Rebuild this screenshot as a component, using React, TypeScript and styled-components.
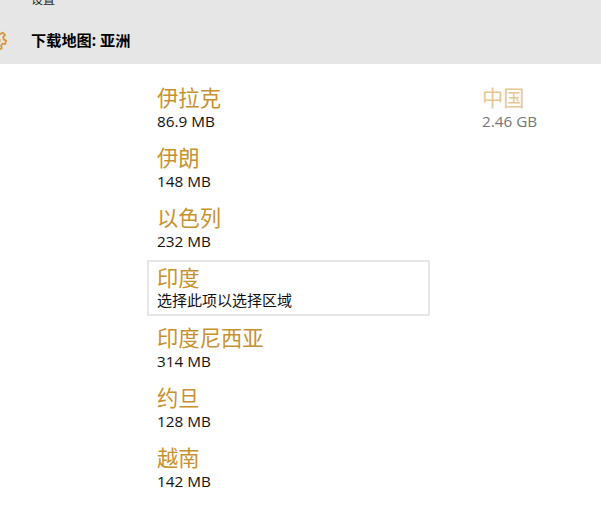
import React from 'react';
import styled, { createGlobalStyle } from 'styled-components';

const regions = [
  { name: '伊拉克', size: '86.9 MB' },
  { name: '伊朗', size: '148 MB' },
  { name: '以色列', size: '232 MB' },
  { name: '印度', size: '选择此项以选择区域', selected: true },
  { name: '印度尼西亚', size: '314 MB' },
  { name: '约旦', size: '128 MB' },
  { name: '越南', size: '142 MB' },
];

const GlobalStyle = createGlobalStyle`
  html, body {
    margin: 0;
    padding: 0;
    background: #fff;
  }
  body {
    font-family: "Open Sans", "Noto Sans CJK SC", sans-serif;
    overflow: hidden;
  }
`;

const Page = styled.div`
  width: 601px;
  height: 517px;
  overflow: hidden;
`;

const Header = styled.header`
  height: 64px;
  background: #e6e6e6;
  overflow: hidden;
`;

const BackLabel = styled.div`
  height: 6px;
  padding-left: 31px;
  font-size: 12px;
  line-height: 0;
  color: #222;
`;

const TitleRow = styled.div`
  display: flex;
  align-items: center;
  margin-top: 23px;
  margin-left: -15px;
`;

const GearIcon = styled.svg`
  width: 22px;
  height: 22px;
  flex: none;
  margin-right: 24px;
`;

const Title = styled.h1`
  margin: -2px 0 0;
  font-size: 15.2px;
  font-weight: 700;
  color: #000;
`;

const Columns = styled.main`
  display: flex;
  padding: 14px 0 0 147px;
`;

const RegionList = styled.div`
  width: 283px;
  display: flex;
  flex-direction: column;
`;

const SideList = styled.div`
  margin-left: 42px;
`;

const Region = styled.div<{ $selected?: boolean }>`
  box-sizing: border-box;
  height: ${props => (props.$selected ? '56px' : '60px')};
  margin: ${props => (props.$selected ? '2px 0' : '0')};
  padding: ${props => (props.$selected ? '2px 8px 0' : '6px 10px 0')};
  border: ${props => (props.$selected ? '2px solid #e6e6e6' : 'none')};
`;

const RegionName = styled.div<{ $muted?: boolean }>`
  font-size: 21.33px;
  line-height: 28px;
  color: ${props => (props.$muted ? '#e6c896' : '#c8912f')};
`;

const RegionSize = styled.div<{ $muted?: boolean; $hint?: boolean }>`
  font-size: ${props => (props.$hint ? '15px' : '15.3px')};
  line-height: ${props => (props.$hint ? '17px' : '18px')};
  color: ${props => (props.$muted ? '#767676' : '#111')};
`;

const App = () => {
  return (
    <Page>
      <GlobalStyle />
      <Header>
        <BackLabel>设置</BackLabel>
        <TitleRow>
          <GearIcon viewBox="0 0 24 24" fill="none" stroke="#d9963a" strokeWidth="2" strokeLinejoin="round">
            <path d="M10 1.500h4l.6 3 2.200 1 2.600-1.600 2.400 2.800-2 2.200.6 2.400 2.600 1.400-.9 3.600-3-.2-1.500 1.900.7 3-3.400 1.400-1.500-2.900h-2.400l-1.500 2.900-3.400-1.400.7-3-1.500-1.900-3 .2-.9-3.600 2.600-1.400.6-2.400-2-2.200 2.400-2.800 2.600 1.600 2.200-1z" />
            <circle cx="12" cy="12.500" r="4" />
          </GearIcon>
          <Title>下载地图: 亚洲</Title>
        </TitleRow>
      </Header>
      <Columns>
        <RegionList>
          {regions.map(region => (
            <Region key={region.name} $selected={region.selected}>
              <RegionName>{region.name}</RegionName>
              <RegionSize $hint={region.selected}>{region.size}</RegionSize>
            </Region>
          ))}
        </RegionList>
        <SideList>
          <Region>
            <RegionName $muted>中国</RegionName>
            <RegionSize $muted>2.46 GB</RegionSize>
          </Region>
        </SideList>
      </Columns>
    </Page>
  );
};

export default App;
